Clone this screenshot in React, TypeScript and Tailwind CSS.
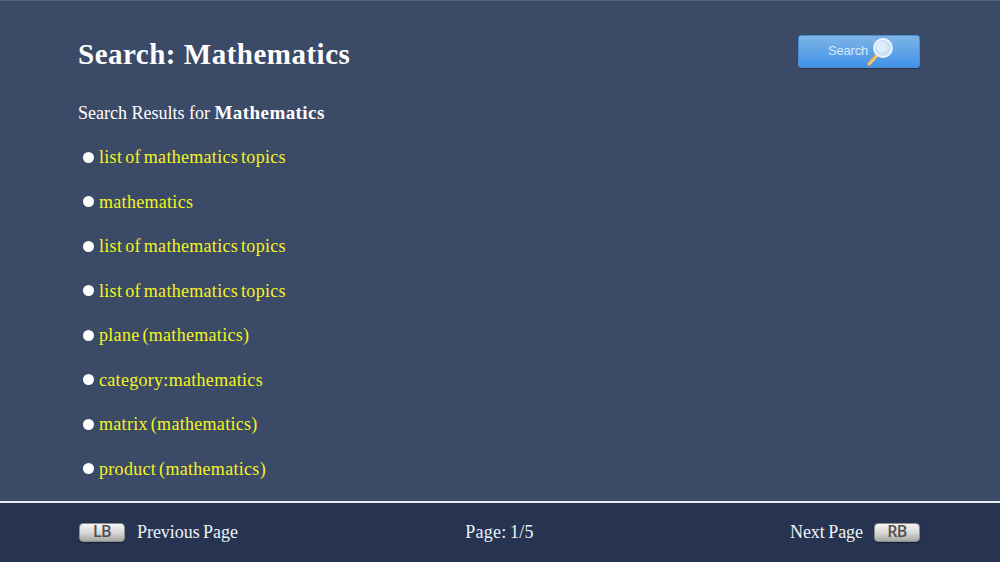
const results = [
  "list of mathematics topics",
  "mathematics",
  "list of mathematics topics",
  "list of mathematics topics",
  "plane (mathematics)",
  "category:mathematics",
  "matrix (mathematics)",
  "product (mathematics)",
];

const serif = "font-['Liberation_Serif',serif]";

const PadButton = ({ label }: { label: string }) => (
  <div className="w-[46px] h-[19px] rounded-[4px] border border-[#8d8f93] bg-gradient-to-b from-[#f6f6f6] via-[#d8d8d8] to-[#a6a6a6] flex items-center justify-center font-['Open_Sans',sans-serif] text-[16px] font-semibold leading-none tracking-[-0.6px] text-[#4f4f4f] shadow-[0_1px_1px_rgba(0,0,0,0.4)]">
    <span className="-mt-[3px]">{label}</span>
  </div>
);

const MagnifierIcon = () => (
  <svg width="28" height="28" viewBox="0 0 28 28" className="-ml-[2px]">
    <path d="M3 26 L11 17" stroke="#f3b052" strokeWidth="3.4" strokeLinecap="round" />
    <path d="M3.6 26.4 L11.4 17.6" stroke="#fbe6b8" strokeWidth="1" strokeLinecap="round" />
    <circle cx="17" cy="10" r="9" fill="#c9e2f7" stroke="#f2f6fa" strokeWidth="1.8" />
    <circle cx="16" cy="9" r="5.5" fill="#dcedfb" />
  </svg>
);

export default function App() {
  return (
    <div className={`w-[1000px] h-[562px] flex flex-col overflow-hidden bg-[#3b4a66] text-white ${serif}`}>
      <main className="h-[501px] px-[78px] border-t border-[#56657f]">
        <div className="flex justify-between items-start pt-[34px] pr-[2px]">
          <h1 className="text-[29px] font-bold leading-[38px] tracking-[0.5px]">Search: Mathematics</h1>
          <button className="w-[122px] h-[33px] rounded-[3px] border border-[#4b8ed6] bg-gradient-to-b from-[#7db4e6] to-[#3f93e8] flex items-center justify-end pr-[25px] shadow-[0_1px_1px_rgba(0,0,0,0.3)]">
            <span className="-mt-[1px] font-['Liberation_Sans',sans-serif] text-[13px] tracking-[-0.2px] text-[#d8ecfb]">Search</span>
            <MagnifierIcon />
          </button>
        </div>
        <p className="mt-[28px] text-[18px] leading-[24px]">
          Search Results for <b className="text-[19px] tracking-[0.43px]">Mathematics</b>
        </p>
        <ul className="mt-[20px] ml-[5px] flex flex-col gap-[20.5px]">
          {results.map((item, i) => (
            <li key={i} className="flex items-center h-[24px] gap-[5px]">
              <span className="w-[11px] h-[11px] rounded-full bg-white" />
              <span className="text-[18px] leading-[24px] tracking-[0.3px] [word-spacing:-1.8px] text-[#f4f41e]">{item}</span>
            </li>
          ))}
        </ul>
      </main>
      <footer className="flex-1 border-t-2 border-[#e6ebf0] bg-[#263451] pl-[79px] pr-[80px] flex items-center justify-between text-[18px] tracking-[-0.05px] [word-spacing:-1px] text-[#eef2f8]">
        <div className="flex items-center gap-[12px] w-[300px]">
          <PadButton label="LB" />
          <span>Previous Page</span>
        </div>
        <span className="tracking-[0.2px]">Page: 1/5</span>
        <div className="flex items-center justify-end gap-[11px] w-[300px]">
          <span>Next Page</span>
          <PadButton label="RB" />
        </div>
      </footer>
    </div>
  );
}
